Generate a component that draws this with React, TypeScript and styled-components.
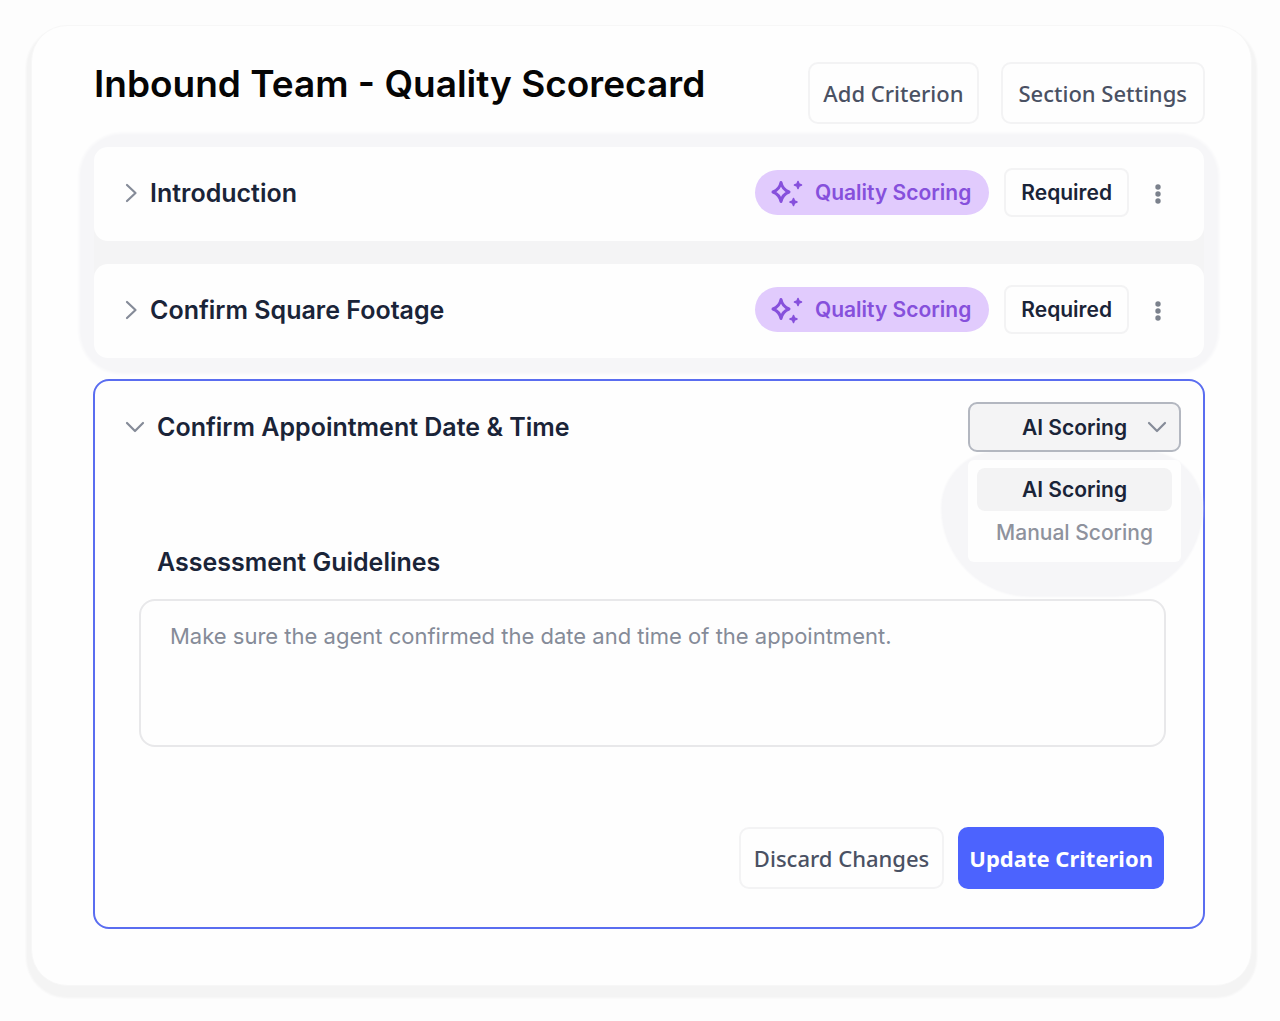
import React, { useState } from "react";
import styled, { createGlobalStyle } from "styled-components";

const INTER = `Inter, "Liberation Sans", sans-serif`;
const NOTO = `"Noto Sans", "Open Sans", sans-serif`;

const GlobalStyle = createGlobalStyle`
  *, *::before, *::after { box-sizing: border-box; }
  body { margin: 0; background: #fdfdfd; font-family: ${INTER}; color: #1a2438; }
  button, select, textarea { font: inherit; color: inherit; margin: 0; }
  h1, h2, p { margin: 0; }
`;

const Page = styled.div`
  padding: 25px 28px 36px 31px;
`;

const Panel = styled.main`
  padding: 36px 46px 56px 61px;
  background: #fefefe;
  border: 1px solid #f7f7f7;
  border-radius: 36px;
  box-shadow: 0 7px 2px 5px #f4f4f4;
`;

const Header = styled.header`
  display: flex;
  justify-content: space-between;
  align-items: flex-start;
  gap: 24px;
  margin-bottom: 23px;
`;

const Title = styled.h1`
  padding-left: 1px;
  font-size: 37px;
  font-weight: 600;
  line-height: 44px;
  color: #050505;
`;

const Actions = styled.div<{ $gap: number }>`
  display: flex;
  justify-content: flex-end;
  gap: ${(p) => p.$gap}px;
`;

const Button = styled.button<{ $primary?: boolean; $wide?: boolean }>`
  height: 62px;
  padding: 0 ${(p) => (p.$primary ? 11 : p.$wide ? 16 : 13)}px;
  font-family: ${NOTO};
  font-size: 22px;
  font-weight: ${(p) => (p.$primary ? 700 : 500)};
  line-height: 30px;
  white-space: nowrap;
  color: ${(p) => (p.$primary ? "#fff" : "#4a5163")};
  background: ${(p) => (p.$primary ? "#4c63fe" : "#fefefe")};
  border: ${(p) => (p.$primary ? "none" : "2px solid #f3f3f4")};
  border-radius: 10px;
`;

const RowList = styled.div`
  display: grid;
  gap: 23px;
  margin: 0 1px;
  background: #f4f4f5;
  border-radius: 28px;
  box-shadow: 0 1px 3px 15px #f6f6f8;
`;

const Row = styled.section`
  display: flex;
  align-items: center;
  height: 94px;
  padding: 0 40px 3px 28px;
  background: #fefefe;
  border-radius: 14px;
`;

const Toggle = styled.button<{ $open?: boolean }>`
  display: flex;
  align-items: center;
  gap: ${(p) => (p.$open ? 10 : 4)}px;
  padding: 0;
  background: none;
  border: none;
  font-size: 25px;
  font-weight: 600;
  line-height: 32px;
`;

const RowTools = styled.div`
  display: flex;
  align-items: center;
  gap: 15px;
  margin-left: auto;
`;

const Badge = styled.span`
  display: flex;
  align-items: center;
  gap: 10px;
  height: 45px;
  padding: 0 18px 0 14px;
  font-size: 21px;
  font-weight: 600;
  color: #8650dc;
  background: #e1cbfd;
  border-radius: 23px;
`;

const Required = styled.button`
  height: 49px;
  padding: 0 15px;
  font-size: 21px;
  font-weight: 600;
  background: #fefefe;
  border: 2px solid #f3f3f4;
  border-radius: 8px;
`;

const MoreButton = styled.button`
  display: flex;
  padding: 2px 0 0;
  margin-left: 8px;
  background: none;
  border: none;
`;

const Editor = styled.section`
  margin-top: 21px;
  padding: 21px 22px 38px;
  background: #fefefe;
  border: 2px solid #5a6df0;
  border-radius: 16px;
`;

const EditorHead = styled.div`
  display: flex;
  justify-content: space-between;
  align-items: center;
  padding-left: 6px;
`;

const Picker = styled.div`
  position: relative;
  width: 213px;
`;

const PickerArrow = styled.span`
  position: absolute;
  z-index: 3;
  top: 13px;
  right: 12px;
  display: flex;
  pointer-events: none;
`;

const Select = styled.select`
  position: relative;
  z-index: 2;
  display: block;
  width: 100%;
  height: 50px;
  padding: 0 32px;
  appearance: none;
  text-align: center;
  text-align-last: center;
  font-size: 21px;
  font-weight: 600;
  background: #f4f4f5;
  border: 2px solid #b3b7c0;
  border-radius: 9px;
`;

const MenuHalo = styled.div`
  position: absolute;
  z-index: 1;
  top: 50px;
  left: -26px;
  right: -21px;
  padding: 8px 21px 34px 26px;
  background: #f6f6f8;
  border-radius: 56px 56px 88px 88px;
  box-shadow: 0 0 2px 1px #f6f6f8;
`;

const Menu = styled.div`
  display: grid;
  padding: 8px 9px;
  background: #fefefe;
  border-radius: 6px;
`;

const Option = styled.button<{ $active: boolean }>`
  height: 43px;
  padding: 0;
  font-size: 21px;
  font-weight: ${(p) => (p.$active ? 600 : 500)};
  color: ${(p) => (p.$active ? "#1a2438" : "#8e929d")};
  background: ${(p) => (p.$active ? "#f3f3f4" : "transparent")};
  border: none;
  border-radius: 8px;
`;

const Field = styled.div`
  display: grid;
  margin: 94px 15px 0 22px;
`;

const FieldLabel = styled.label`
  padding-left: 18px;
  margin-bottom: 21px;
  font-size: 25px;
  font-weight: 600;
  line-height: 32px;
`;

const Guidelines = styled.textarea`
  width: 100%;
  height: 148px;
  padding: 19px 29px;
  font-size: 22px;
  line-height: 32px;
  color: #858b98;
  background: #fefefe;
  border: 2px solid #e8e8ea;
  border-radius: 16px;
  resize: none;
`;

const EditorFoot = styled.div`
  margin: 80px 17px 0 0;
`;

const Chevron = ({ down }: { down?: boolean }) => (
  <svg width="24" height="24" viewBox="0 0 24 24" fill="none" stroke="#858b98" strokeWidth="2.2" strokeLinecap="round" strokeLinejoin="round" aria-hidden="true">
    <path d={down ? "M4 8l8 8 8-8" : "M5 4l8.500 8-8.500 8"} />
  </svg>
);

const Sparkles = () => (
  <svg width="36" height="32" viewBox="0 0 36 32" fill="#8650dc" stroke="#8650dc" strokeLinejoin="round" aria-hidden="true">
    <path
      fill="none"
      strokeWidth="3"
      d="M12 5.500C13 10.500 14.800 13 20 15C14.800 17 13 19.500 12 24.500C11 19.500 9.200 17 4 15C9.200 13 11 10.500 12 5.500Z"
    />
    <path
      strokeWidth="1.600"
      d="M29 4.500L30 7L32.500 8L30 9L29 11.500L28 9L25.500 8L28 7ZM24.500 21.500L25.500 24L28 25L25.500 26L24.500 28.500L23.500 26L21 25L23.500 24Z"
    />
  </svg>
);

const Dots = () => (
  <svg width="12" height="24" viewBox="0 0 12 24" fill="#7b818c" aria-hidden="true">
    <circle cx="6" cy="5" r="2.700" />
    <circle cx="6" cy="12" r="2.700" />
    <circle cx="6" cy="19" r="2.700" />
  </svg>
);

const criteria = ["Introduction", "Confirm Square Footage"];
const modes = ["AI Scoring", "Manual Scoring"];

export default function App() {
  const [mode, setMode] = useState(modes[0]);
  const [text, setText] = useState("Make sure the agent confirmed the date and time of the appointment.");

  return (
    <>
      <GlobalStyle />
      <Page>
        <Panel>
          <Header>
            <Title>Inbound Team - Quality Scorecard</Title>
            <Actions $gap={22}>
              <Button type="button">Add Criterion</Button>
              <Button type="button" $wide>Section Settings</Button>
            </Actions>
          </Header>

          <RowList>
            {criteria.map((name) => (
              <Row key={name}>
                <Toggle type="button" aria-expanded={false}>
                  <Chevron />
                  {name}
                </Toggle>
                <RowTools>
                  <Badge>
                    <Sparkles />
                    Quality Scoring
                  </Badge>
                  <Required type="button">Required</Required>
                  <MoreButton type="button" aria-label={`More options for ${name}`}>
                    <Dots />
                  </MoreButton>
                </RowTools>
              </Row>
            ))}
          </RowList>

          <Editor>
            <EditorHead>
              <Toggle type="button" aria-expanded $open>
                <Chevron down />
                Confirm Appointment Date &amp; Time
              </Toggle>
              <Picker>
                <Select aria-label="Scoring mode" value={mode} onChange={(e) => setMode(e.target.value)}>
                  {modes.map((m) => (
                    <option key={m}>{m}</option>
                  ))}
                </Select>
                <PickerArrow>
                  <Chevron down />
                </PickerArrow>
                <MenuHalo>
                  <Menu>
                    {modes.map((m) => (
                      <Option key={m} type="button" $active={m === mode} onClick={() => setMode(m)}>
                        {m}
                      </Option>
                    ))}
                  </Menu>
                </MenuHalo>
              </Picker>
            </EditorHead>

            <Field>
              <FieldLabel htmlFor="guidelines">Assessment Guidelines</FieldLabel>
              <Guidelines id="guidelines" value={text} onChange={(e) => setText(e.target.value)} />
            </Field>

            <EditorFoot>
              <Actions $gap={14}>
                <Button type="button">Discard Changes</Button>
                <Button type="button" $primary>Update Criterion</Button>
              </Actions>
            </EditorFoot>
          </Editor>
        </Panel>
      </Page>
    </>
  );
}
